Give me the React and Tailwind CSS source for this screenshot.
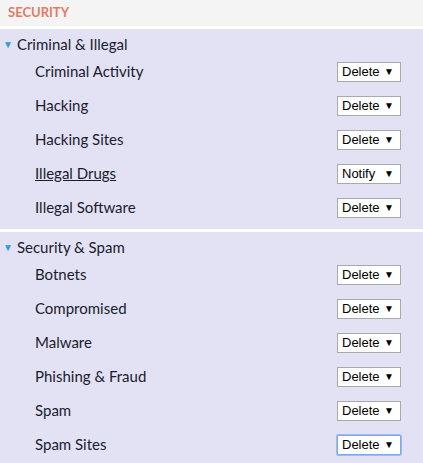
import { useState } from "react";

const sections = [
  {
    title: "Criminal & Illegal",
    items: [
      { name: "Criminal Activity", action: "Delete" },
      { name: "Hacking", action: "Delete" },
      { name: "Hacking Sites", action: "Delete" },
      { name: "Illegal Drugs", action: "Notify", link: true },
      { name: "Illegal Software", action: "Delete" },
    ],
  },
  {
    title: "Security & Spam",
    items: [
      { name: "Botnets", action: "Delete" },
      { name: "Compromised", action: "Delete" },
      { name: "Malware", action: "Delete" },
      { name: "Phishing & Fraud", action: "Delete" },
      { name: "Spam", action: "Delete" },
      { name: "Spam Sites", action: "Delete", focused: true },
    ],
  },
];

function ActionBox({ value, focused }) {
  return (
    <div
      className={`w-[64px] h-[20px] bg-white border flex items-center justify-between pl-[4px] pr-[6px] text-[13px] text-black font-['Liberation_Sans',Arial,sans-serif] ${
        focused
          ? "border-[#7ea6e8] outline outline-1 outline-[#9dbdf0] rounded-[1px]"
          : "border-[#a9a9a9]"
      }`}
    >
      <span>{value}</span>
      <span className="text-[10px] leading-none">▼</span>
    </div>
  );
}

export default function App() {
  const [open] = useState([true, true]);
  return (
    <div className="w-[423px] h-[463px] overflow-hidden bg-[#e2e2f4] font-['Lato','Open_Sans',sans-serif] text-[#1b1b2e]">
      <div className="h-[26px] bg-[#f4f4f4] flex items-center px-[8px] text-[13px] font-bold text-[#e27b63] border-b-[3px] border-white box-content">
        SECURITY
      </div>
      {sections.map((s, i) => (
        <div
          key={s.title}
          className={`pt-[4px] pb-[4px] ${i > 0 ? "border-t-[3px] border-white" : ""}`}
        >
          <div className="h-[22px] flex items-center pl-[3px] gap-[4px] text-[15px]">
            <span className="text-[#2e9ed8] text-[10px] leading-none">
              {open[i] ? "▼" : "▶"}
            </span>
            <span>{s.title}</span>
          </div>
          {s.items.map((it) => (
            <div
              key={it.name}
              className="h-[34px] flex items-center justify-between pl-[35px] pr-[22px] text-[15px]"
            >
              <span className={`-mt-[2px] ${it.link ? "underline" : ""}`}>{it.name}</span>
              <ActionBox value={it.action} focused={it.focused} />
            </div>
          ))}
        </div>
      ))}
    </div>
  );
}
